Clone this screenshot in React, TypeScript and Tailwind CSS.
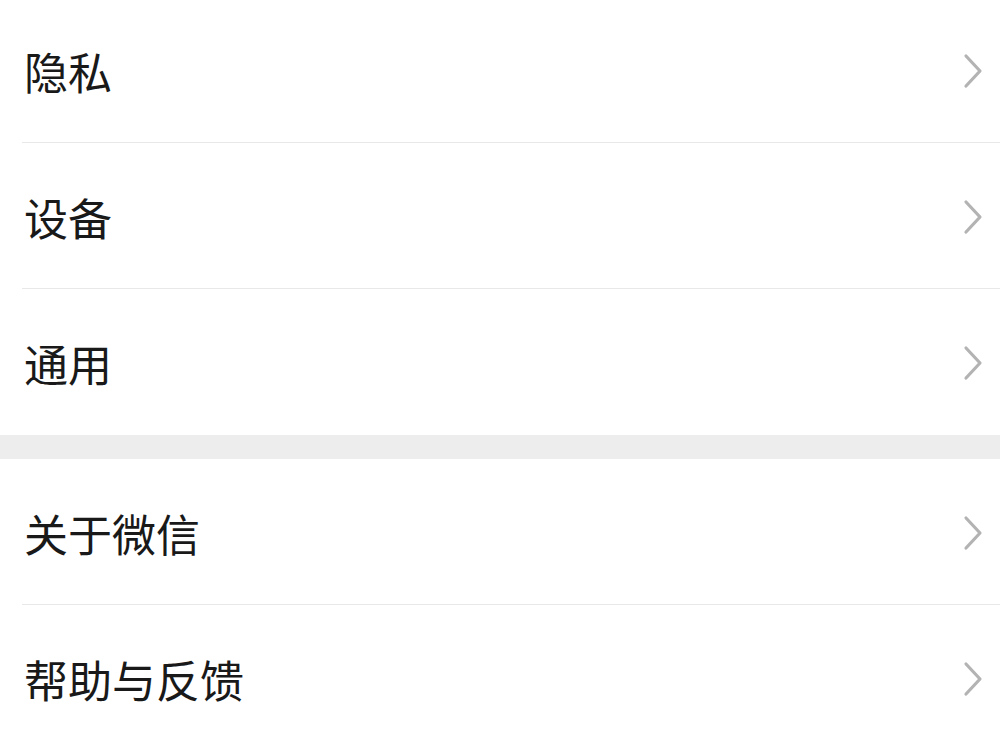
const groups: string[][] = [
  ['隐私', '设备', '通用'],
  ['关于微信', '帮助与反馈'],
];

function Chevron() {
  return (
    <svg width="22" height="36" viewBox="0 0 22 36" className="shrink-0">
      <path d="M4 3 L18 18 L4 33" fill="none" stroke="#b3b3b3" strokeWidth="3.2" strokeLinecap="round" strokeLinejoin="round" />
    </svg>
  );
}

function Row({ label, first, last }: { label: string; first?: boolean; last?: boolean }) {
  return (
    <div className="pl-[22px]">
      <div
        className={`flex items-center justify-between pr-[16px] ${first ? 'h-[143px]' : 'h-[146px] pt-[2px]'} ${
          last ? '' : 'border-b border-[#e8e8e8]'
        }`}
      >
        <span className="pl-[2px] text-[44px] leading-none text-[#191919]">{label}</span>
        <Chevron />
      </div>
    </div>
  );
}

export default function App() {
  return (
    <div
      className="w-[1000px] h-[750px] overflow-hidden bg-[#ededed]"
      style={{ fontFamily: '"Noto Sans CJK SC", "Noto Sans", sans-serif' }}
    >
      {groups.map((g, gi) => (
        <div key={gi} className={`bg-white ${gi > 0 ? 'mt-[24px]' : ''}`}>
          {g.map((label, i) => (
            <Row key={label} label={label} first={gi === 0 && i === 0} last={i === g.length - 1} />
          ))}
        </div>
      ))}
    </div>
  );
}
